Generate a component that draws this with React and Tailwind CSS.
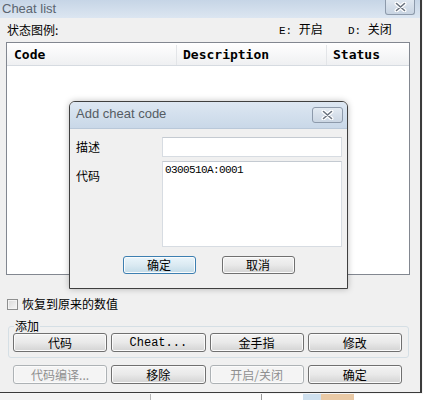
import React from 'react';

const cjk = "font-['SimSun','Noto_Sans_CJK_SC',sans-serif]";

function CloseGlyph({ w, h }) {
    return (
        <svg width={w} height={h} viewBox="0 0 12 10">
            <path d="M2 1.5 L10 8.5 M10 1.5 L2 8.5" stroke="#ffffff" strokeWidth="4" strokeLinecap="round" />
            <path d="M2 1.5 L10 8.5 M10 1.5 L2 8.5" stroke="#6b7480" strokeWidth="1.6" strokeLinecap="round" />
        </svg>
    );
}

function Btn({ children, kind = 'normal', className = '' }) {
    const styles = {
        normal: 'border-[#707070] bg-linear-to-b from-[#f3f3f3] via-[#e9e9e9] to-[#d3d3d3] text-black',
        primary: 'border-[#3c7fb1] bg-linear-to-b from-[#eaf5fb] via-[#dbeaf2] to-[#c2dbe8] text-black',
        disabled: 'border-[#adb2b5] bg-[#f4f4f4] text-[#8f8f8f]',
    };
    return (
        <div
            className={`flex items-center justify-center rounded-[3px] border shadow-[inset_0_0_0_1px_#fbfbfb] text-[12px] leading-none ${styles[kind]} ${className}`}
        >
            {children}
        </div>
    );
}

export default function App() {
    return (
        <div className={`relative w-[423px] h-[400px] overflow-hidden bg-[#f6f6f6] ${cjk}`}>
            {/* main window */}
            <div className="relative w-[422px] h-[393px] bg-[#f0f0f0] border-r-2 border-b border-[#3b3b3b] flex flex-col">
                <div className="h-[18px] flex items-start justify-between bg-linear-to-b from-[#c6d5e6] to-[#dce6f1]">
                    <span className="pl-[2px] pt-[1px] text-[13px] leading-[16px] text-[#5b6570] font-['Liberation_Sans',sans-serif]">
                        Cheat list
                    </span>
                    <div className="mr-[5px] w-[30px] h-[15px] rounded-b-[3px] border border-t-0 border-[#8d9aab] bg-linear-to-b from-[#dfe7f0] to-[#c8d4e2] flex items-center justify-center">
                        <CloseGlyph w={13} h={10} />
                    </div>
                </div>

                <div className="h-[24px] flex items-center pl-[7px] text-[12px] text-black">
                    <span className="w-[272px]">状态图例:</span>
                    <span className="w-[69px]">
                        <span className="font-['Liberation_Mono',monospace] text-[11px]">E: </span>开启
                    </span>
                    <span>
                        <span className="font-['Liberation_Mono',monospace] text-[11px]">D: </span>关闭
                    </span>
                </div>

                {/* list */}
                <div className="ml-[6px] w-[404px] h-[233px] border border-[#828790] bg-white">
                    <div className="h-[23px] pt-[2px] flex bg-linear-to-b from-[#ffffff] to-[#eff0f2] border-b border-[#d6dbe1] text-[13px] font-bold font-['DejaVu_Sans_Mono',monospace] text-black">
                        <div className="w-[170px] pl-[7px] flex items-center border-r border-[#e3e5e8]">Code</div>
                        <div className="w-[150px] pl-[6px] flex items-center border-r border-[#e3e5e8]">Description</div>
                        <div className="flex-1 pl-[6px] flex items-center">Status</div>
                    </div>
                </div>

                {/* restore checkbox */}
                <div className="mt-[22px] h-[14px] flex items-center pl-[7px] text-[12px] text-black">
                    <div className="w-[11px] h-[11px] border border-[#8e8f8f] bg-linear-to-br from-[#d9d9d9] to-[#f7f7f7] shadow-[inset_0_0_0_1px_#f4f4f4]" />
                    <span className="ml-[4px]">恢复到原来的数值</span>
                </div>

                {/* group box */}
                <fieldset className="mt-[8px] ml-[8px] w-[401px] border border-[#d5dfe5] rounded-[3px] pl-[4px] pb-[5px] pt-0">
                    <legend className="ml-[1px] px-[1px] text-[12px] leading-[14px] text-black">添加</legend>
                    <div className="grid grid-cols-4 gap-[4px] w-[389px]">
                        <Btn className="h-[19px]">代码</Btn>
                        <Btn className="h-[19px] font-['Liberation_Mono',monospace] text-[11px]">Cheat...</Btn>
                        <Btn className="h-[19px]">金手指</Btn>
                        <Btn className="h-[19px]">修改</Btn>
                    </div>
                </fieldset>

                <div className="mt-[7px] ml-[13px] grid grid-cols-4 gap-[4px] w-[389px]">
                    <Btn kind="disabled" className="h-[19px]">代码编译...</Btn>
                    <Btn className="h-[19px]">移除</Btn>
                    <Btn kind="disabled" className="h-[19px]">开启/关闭</Btn>
                    <Btn className="h-[19px]">确定</Btn>
                </div>
            </div>

            {/* dialog over the list */}
            <div className="absolute left-[69px] top-[101px] w-[279px] h-[188px] border border-[#3f3f3f] rounded-t-[6px] bg-[#f0f0f0] flex flex-col shadow-[0_0_6px_rgba(0,0,0,0.25)]">
                <div className="h-[27px] rounded-t-[5px] bg-linear-to-b from-[#dde7f2] to-[#c9d8e8] flex items-start justify-between border-b border-[#b9c8d9]">
                    <span className="pl-[6px] pt-[4px] text-[13px] leading-[16px] text-[#555c63] font-['Liberation_Sans',sans-serif]">
                        Add cheat code
                    </span>
                    <div className="mt-[5px] mr-[4px] w-[31px] h-[16px] rounded-[3px] border border-[#8d9aab] bg-linear-to-b from-[#e3eaf2] to-[#cbd6e3] flex items-center justify-center">
                        <CloseGlyph w={13} h={10} />
                    </div>
                </div>
                <div className="flex-1 flex flex-col pl-[6px] pt-[8px] text-[12px] text-black">
                    <div className="flex items-center">
                        <span className="w-[86px]">描述</span>
                        <div className="w-[180px] h-[20px] bg-white border border-[#d7dce2] border-t-[#c4cad1]" />
                    </div>
                    <div className="mt-[4px] flex items-start">
                        <span className="w-[86px] pt-[8px] leading-[14px]">代码</span>
                        <div className="w-[180px] h-[86px] bg-white border border-[#d7dce2] border-t-[#c4cad1] pl-[2px] pt-[2px] font-['Liberation_Mono',monospace] text-[11px] leading-[12px] tracking-[-0.6px]">
                            0300510A:0001
                        </div>
                    </div>
                    <div className="mt-[9px] pr-[6px] flex justify-center gap-[26px]">
                        <Btn kind="primary" className="w-[73px] h-[18px]">确定</Btn>
                        <Btn className="w-[73px] h-[18px]">取消</Btn>
                    </div>
                </div>
            </div>

            {/* desktop peeking below */}
            <div className="absolute left-0 top-[394px] w-[423px] h-[6px] flex">
                <div className="w-[150px] bg-[#f4f4f4]" />
                <div className="w-[111px] bg-[#fafafa] border-l border-[#b5b5b5]" />
                <div className="w-[42px] bg-[#ffffff] border-l border-[#9a9a9a]" />
                <div className="w-[18px] bg-[#cfe0ee]" />
                <div className="w-[33px] bg-[#e9c9a5]" />
                <div className="flex-1 bg-white" />
            </div>
        </div>
    );
}
